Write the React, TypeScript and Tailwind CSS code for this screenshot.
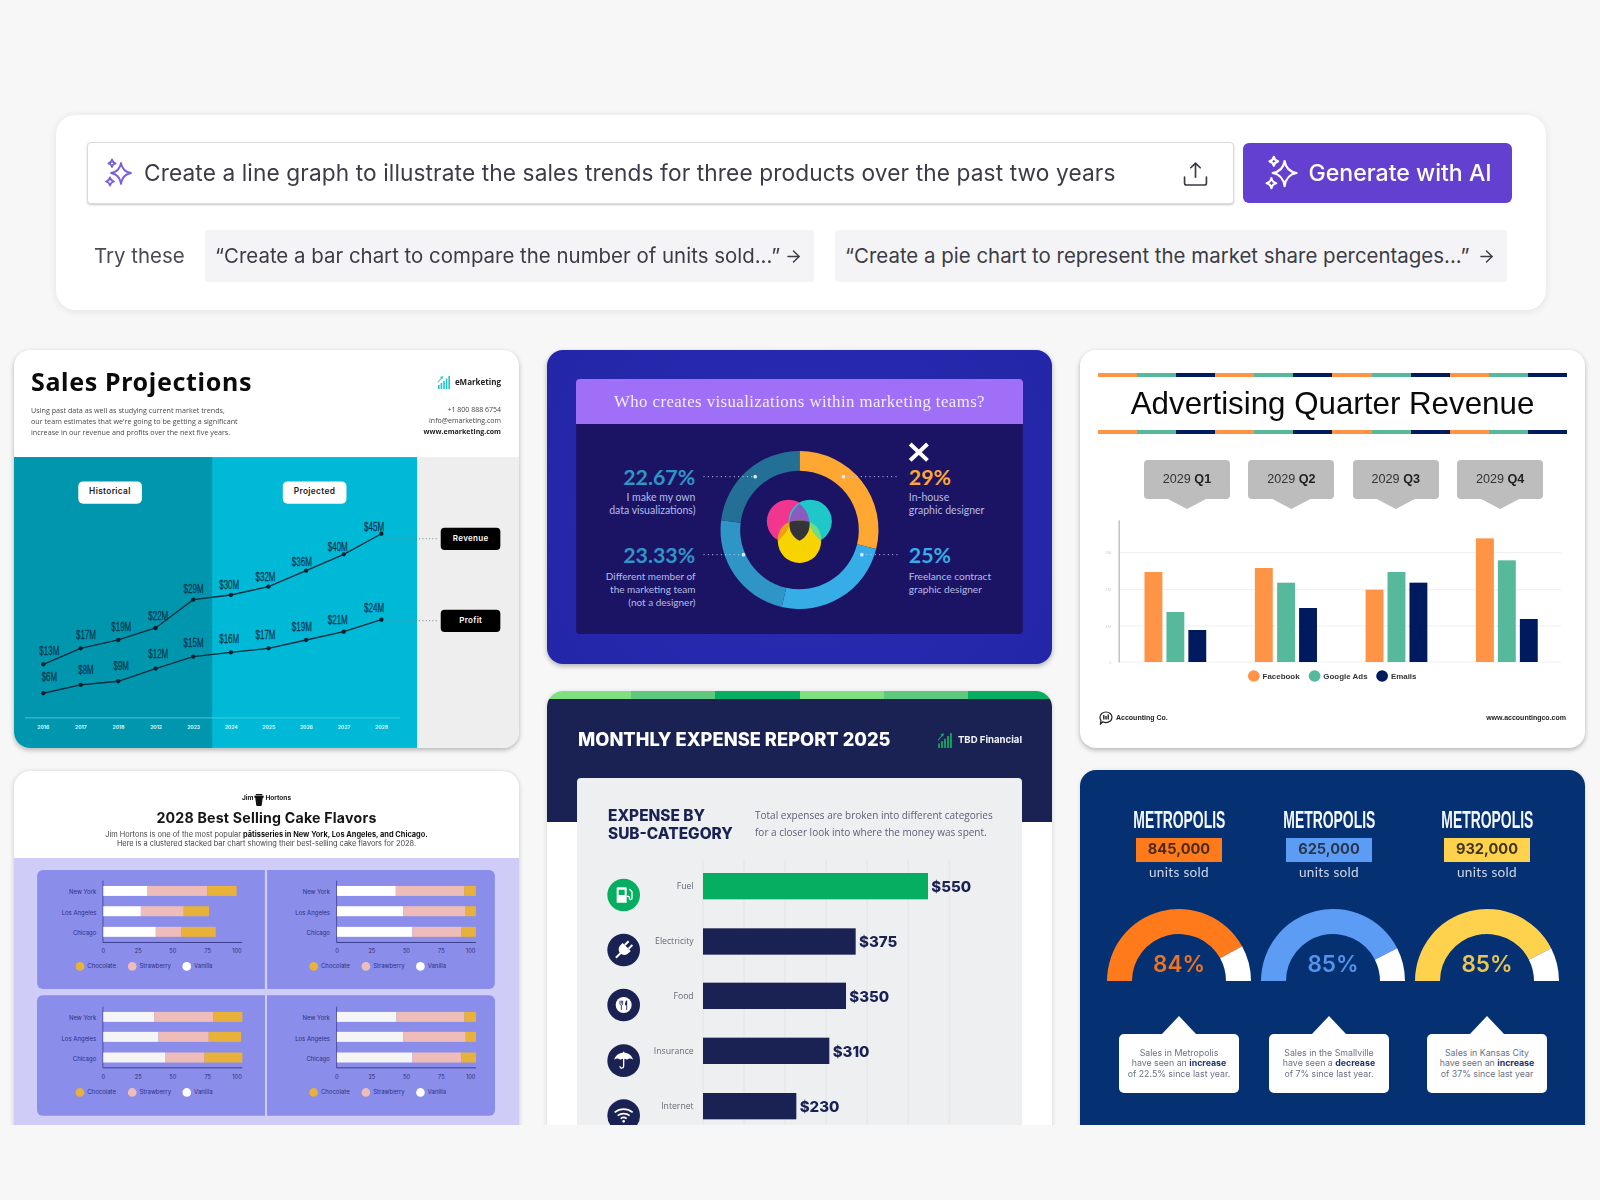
import React from "react";
import { ArrowRight } from "lucide-react";

const pt = (cx: number, cy: number, r: number, a: number) => {
  const t = ((a - 90) * Math.PI) / 180;
  return [cx + r * Math.cos(t), cy + r * Math.sin(t)];
};
const sector = (cx: number, cy: number, R: number, r: number, a0: number, a1: number) => {
  const [x0, y0] = pt(cx, cy, R, a0);
  const [x1, y1] = pt(cx, cy, R, a1);
  const [x2, y2] = pt(cx, cy, r, a1);
  const [x3, y3] = pt(cx, cy, r, a0);
  const large = a1 - a0 > 180 ? 1 : 0;
  return `M${x0} ${y0}A${R} ${R} 0 ${large} 1 ${x1} ${y1}L${x2} ${y2}A${r} ${r} 0 ${large} 0 ${x3} ${y3}Z`;
};

const Sparkle = ({ color, className }: { color: string; className: string }) => (
  <svg viewBox="0 0 30 30" className={className} fill="none" stroke={color} strokeWidth="1.8" strokeLinejoin="round">
    <path d="M18 5C18.9 10.8 22 14 28 15C22 16 18.9 19.2 18 26C17.1 19.2 14 16 8 15C14 14 17.1 10.8 18 5Z" />
    <path d="M9 1.5C9.4 3.8 10.4 4.8 12.6 5.3C10.4 5.8 9.4 6.8 9 9.1C8.6 6.8 7.6 5.8 5.4 5.3C7.6 4.8 8.6 3.8 9 1.5Z" />
    <path d="M7 19.3C7.4 21.8 8.6 22.9 11 23.5C8.6 24.1 7.4 25.2 7 27.7C6.6 25.2 5.4 24.1 3 23.5C5.4 22.9 6.6 21.8 7 19.3Z" />
  </svg>
);

const Chip = ({ text, className }: { text: string; className: string }) => (
  <div className={`flex h-[52px] items-center justify-between whitespace-nowrap rounded-[3px] bg-[#f4f4f6] pl-[10px] pr-[11px] text-[20.45px] text-[#3c3c46] ${className}`}>
    <span>{text}</span>
    <ArrowRight size={19} strokeWidth={1.8} />
  </div>
);

const SEARCH = "Create a line graph to illustrate the sales trends for three products over the past two years";

const PromptPanel = () => (
  <section className="ml-[56px] mr-[54px] h-[195px] rounded-[20px] bg-white pl-[31px] pt-[27px] font-['Inter',sans-serif] shadow-[0_1px_8px_rgba(0,0,0,0.09)]">
    <div className="flex h-[62px] items-start gap-[9px]">
      <div className="flex h-[62px] w-[1147px] items-center rounded-[4px] border border-[#dcdcde] bg-white pl-[15px] pr-[25px] shadow-[0_1px_2px_rgba(0,0,0,0.22)]">
        <Sparkle color="#7a5fd8" className="h-[30px] w-[30px]" />
        <span className="ml-[11px] flex-1 text-[22.7px] tracking-[0.1px] text-[#3c3c48]">{SEARCH}</span>
        <svg viewBox="0 0 24 24" className="h-[25px] w-[25px]" fill="none" stroke="#3a3a44" strokeWidth="1.6" strokeLinecap="round" strokeLinejoin="round">
          <path d="M12 15.5V2M7.5 6.5L12 2L16.5 6.5" />
          <path d="M1.5 15.5V21C1.5 22 2.2 23 3.5 23H20.5C21.8 23 22.5 22 22.5 21V15.5" />
        </svg>
      </div>
      <button className="mt-[1px] flex h-[60px] w-[269px] items-center justify-center gap-[9px] rounded-[6px] bg-[#6340d0] text-[23.1px] font-medium text-white">
        <Sparkle color="#ffffff" className="h-[36px] w-[36px]" />
        <span>Generate with AI</span>
      </button>
    </div>
    <div className="mt-[26px] flex h-[52px] items-center">
      <span className="ml-[7px] w-[111px] text-[20.45px] text-[#4a4a55]">Try these</span>
      <Chip text="“Create a bar chart to compare the number of units sold...”" className="w-[609px]" />
      <Chip text="“Create a pie chart to represent the market share percentages...”" className="ml-[21px] w-[672px]" />
    </div>
  </section>
);

const rev: [number, number, string, number, number][] = [
  [100, 958, "$13M", 118, 915], [212, 910, "$17M", 228, 868], [325, 885, "$19M", 334, 845], [437, 849, "$22M", 445, 811], [550, 764, "$29M", 551, 730],
  [663, 750, "$30M", 658, 718], [776, 725, "$32M", 767, 694], [889, 677, "$36M", 876, 650], [1002, 628, "$40M", 984, 604], [1115, 566, "$45M", 1093, 545],
];
const prof: [number, number, string, number, number][] = [
  [100, 1045, "$6M", 118, 995], [212, 1020, "$8M", 228, 973], [325, 1009, "$9M", 334, 961], [437, 971, "$12M", 445, 926], [550, 935, "$15M", 551, 892],
  [663, 922, "$16M", 658, 879], [776, 910, "$17M", 767, 868], [889, 885, "$19M", 876, 845], [1002, 860, "$21M", 984, 822], [1115, 824, "$24M", 1093, 788],
];
const years = ["2016", "2017", "2018", "2012", "2023", "2024", "2025", "2026", "2027", "2028"];

const BarsLogo = ({ color, className }: { color: string; className: string }) => (
  <svg viewBox="0 0 14 14" className={className} fill={color}>
    <rect x="1" y="10" width="1.6" height="4" />
    <rect x="3.6" y="8" width="1.6" height="6" />
    <rect x="6.2" y="6" width="1.6" height="8" />
    <rect x="8.8" y="3.5" width="1.6" height="10.5" />
    <rect x="11.4" y="1" width="1.6" height="13" />
    <path d="M0.5 7L4 3L3 2L6 1L5.5 4L4.8 3.6L1.2 7.6Z" />
  </svg>
);

const SalesCard = () => (
  <article className="h-[398px] overflow-hidden rounded-[16px] bg-white shadow-[0_2px_5px_rgba(0,0,0,0.28)]">
    <header className="flex h-[107px] justify-between pl-[17px] pr-[18px] pt-[14px]">
      <div>
        <h2 className="font-['Noto_Sans',sans-serif] text-[25px] font-bold leading-[34px] tracking-[0.65px] text-[#0b0b0b]">Sales Projections</h2>
        <p className="mt-[7px] font-['Open_Sans',sans-serif] text-[7.2px] leading-[11px] text-[#4a4a4a]">
          Using past data as well as studying current market trends,<br />
          our team estimates that we're going to be getting a significant<br />
          increase in our revenue and profits over the next five years.
        </p>
      </div>
      <div className="flex flex-col items-end font-['Open_Sans',sans-serif]">
        <div className="mt-[5px] flex h-[26px] items-center gap-[4px]">
          <BarsLogo color="#22c3cf" className="h-[14px] w-[14px]" />
          <span className="text-[8px] font-bold text-[#222]">eMarketing</span>
        </div>
        <p className="mt-[9px] text-right text-[7px] leading-[11px] text-[#444]">
          +1 800 888 6754<br />info@emarketing.com<br /><b className="text-[#222]">www.emarketing.com</b>
        </p>
      </div>
    </header>
    <svg viewBox="12 336 1516 873" className="block h-[291px] w-[505px]">
      <rect x="12" y="336" width="1516" height="873" fill="#eeeeee" />
      <rect x="12" y="336" width="1210" height="873" fill="#00b9d6" />
      <rect x="12" y="336" width="595" height="873" fill="#0097ae" />
      {[[205, "Historical"], [819, "Projected"]].map(([x, t]) => (
        <g key={t as string}>
          <rect x={x as number} y="409" width="191" height="67" rx="14" fill="#fff" />
          <text x={(x as number) + 95} y="448" textAnchor="middle" fontFamily="Inter" fontWeight="600" fontSize="25" letterSpacing="1" fill="#222">{t}</text>
        </g>
      ))}
      {[[548, "Revenue", 581], [794, "Profit", 827]].map(([y, t, ly]) => (
        <g key={t as string}>
          <rect x="1293" y={y as number} width="179" height="67" rx="12" fill="#000" />
          <text x="1383" y={(y as number) + 40} textAnchor="middle" fontFamily="Inter" fontWeight="600" fontSize="24" letterSpacing="1" fill="#fff">{t}</text>
          <line x1="1118" y1={ly as number} x2="1282" y2={ly as number} stroke="#6b8a90" strokeWidth="3" strokeDasharray="3 7" />
        </g>
      ))}
      {[rev, prof].map((s, i) => (
        <g key={i}>
          <polyline points={s.map((p) => `${p[0]},${p[1]}`).join(" ")} fill="none" stroke="#062a3c" strokeWidth="4" />
          {s.map((p) => <circle key={p[0]} cx={p[0]} cy={p[1]} r="6.5" fill="#04202e" />)}
          {s.map((p) => (
            <text key={p[2] + p[0]} x={p[3]} y={p[4] + 14} textAnchor="middle" fontFamily="Liberation Sans" fontSize="38" stroke="#06384e" strokeWidth="0.8" fill="#06384e" textLength={p[2].length > 3 ? 60 : 46} lengthAdjust="spacingAndGlyphs">{p[2]}</text>
          ))}
        </g>
      ))}
      <line x1="45" y1="1119" x2="1170" y2="1119" stroke="#4fd2e4" strokeWidth="2.5" />
      {years.map((y, i) => (
        <text key={i} x={100 + i * 112.8} y="1151" textAnchor="middle" fontFamily="Inter" fontWeight="700" fontSize="15" fill="#d8f6fb">{y}</text>
      ))}
    </svg>
  </article>
);

const legendSet = [[209, "Chocolate", "#e8b23a"], [366, "Strawberry", "#efbdb9"], [530, "Vanilla", "#ffffff"]] as const;

const CakePanel = ({ ox, bars, h, fill, yr, axisTop, axisBot, tick, legend, rowLabels, cls }: {
  ox: number; bars: number[][]; h: number; fill: string; yr: number[]; axisTop: number; axisBot: number; tick: number; legend: number; rowLabels: number[]; cls: string;
}) => (
  <svg viewBox={`${-ox} 0 685 ${h}`} className={cls}>
    <rect x={-ox} y="0" width="685" height={h} fill="#8b8deb" />
    <line x1="198" y1={axisTop} x2="198" y2={axisBot} stroke="#2d2f7a" strokeWidth="2" />
    <line x1="198" y1={axisBot} x2="617" y2={axisBot} stroke="#2d2f7a" strokeWidth="2.5" />
    {bars.map((b, i) => (
      <g key={i}>
        <rect x="199" y={yr[i]} width={b[0]} height="30" fill={fill} />
        <rect x={199 + b[0]} y={yr[i]} width={b[1] - b[0]} height="30" fill="#efbdb9" />
        <rect x={199 + b[1]} y={yr[i]} width={b[2] - b[1]} height="30" fill="#e8b23a" />
      </g>
    ))}
    {["New York", "Los Angeles", "Chicago"].map((t, i) => (
      <text key={t} x="178" y={rowLabels[i]} textAnchor="end" fontFamily="Inter" fontSize="18" fill="#2d2f7a">{t}</text>
    ))}
    {[["0", 199], ["25", 304], ["50", 408], ["75", 513], ["100", 601]].map(([t, x]) => (
      <text key={t as string} x={x as number} y={tick} textAnchor="middle" fontFamily="Inter" fontSize="17" fill="#2d2f7a">{t}</text>
    ))}
    {legendSet.map(([x, t, c]) => (
      <g key={t}>
        <circle cx={x - 80} cy={legend} r="13" fill={c} />
        <text x={x - 58} y={legend + 6} fontFamily="Inter" fontSize="18" fill="#2d2f7a">{t}</text>
      </g>
    ))}
  </svg>
);

const CakeCard = () => (
  <article className="mt-[23px] h-[420px] overflow-hidden rounded-t-[16px] bg-[#d0ccf8] shadow-[0_1px_5px_rgba(0,0,0,0.2)]">
    <header className="flex h-[87px] flex-col items-center bg-white pt-[20px] font-['Inter',sans-serif] text-[#151515]">
      <div className="flex h-[16px] items-center gap-[1px] text-[6.5px] font-bold">
        <span>Jim</span>
        <svg viewBox="0 0 10 14" className="h-[13px] w-[10px]" fill="#111"><path d="M0 3H10V5H9L8 13C8 13.6 7.5 14 7 14H3C2.5 14 2 13.6 2 13L1 5H0ZM2 1H8L9 2.4H1Z" /></svg>
        <span>Hortons</span>
      </div>
      <h2 className="mt-[1px] text-[14.2px] font-bold leading-[20px] tracking-[0.2px]">2028 Best Selling Cake Flavors</h2>
      <p className="mt-[2px] text-center text-[7.4px] leading-[9px] text-[#444]">
        Jim Hortons is one of the most popular <b className="text-[#111]">pâtisseries in New York, Los Angeles, and Chicago.</b><br />
        Here is a clustered stacked bar chart showing their best-selling cake flavors for 2028.
      </p>
    </header>
    <div className="grid grid-cols-[228px_228px] gap-x-[2px] gap-y-[6px] px-[23px] pt-[12px]">
      <CakePanel ox={0} h={358} fill="#ffffff" axisTop={32} axisBot={218} tick={249} legend={290} yr={[48, 109, 171]} rowLabels={[72, 134, 196]}
        bars={[[133, 313, 401], [113, 242, 318], [158, 234, 338]]} cls="block h-[119px] w-[228px] rounded-l-[6px]" />
      <CakePanel ox={11} h={358} fill="#ffffff" axisTop={32} axisBot={218} tick={249} legend={290} yr={[48, 109, 171]} rowLabels={[72, 134, 196]}
        bars={[[177, 383, 418], [199, 387, 418], [227, 374, 418]]} cls="block h-[119px] w-[228px] rounded-r-[6px]" />
      <CakePanel ox={0} h={362} fill="#f5f5f5" axisTop={34} axisBot={218} tick={251} legend={292} yr={[50, 110, 172]} rowLabels={[74, 136, 198]}
        bars={[[153, 331, 418], [166, 317, 414], [187, 304, 418]]} cls="block h-[121px] w-[228px] rounded-l-[6px]" />
      <CakePanel ox={11} h={362} fill="#f5f5f5" axisTop={34} axisBot={218} tick={251} legend={292} yr={[50, 110, 172]} rowLabels={[74, 136, 198]}
        bars={[[179, 383, 418], [199, 387, 418], [227, 374, 418]]} cls="block h-[121px] w-[228px] rounded-r-[6px]" />
    </div>
  </article>
);

const Label = ({ x, y, lines, anchor, size }: { x: number; y: number; lines: string[]; anchor: "start" | "end"; size: number }) => (
  <>
    {lines.map((l, i) => (
      <text key={l} x={x} y={y + i * 38.5} textAnchor={anchor} fontFamily="Lato" fontSize={size} fill="#b5bbe6">{l}</text>
    ))}
  </>
);

const DonutCard = () => (
  <article className="h-[314px] overflow-hidden rounded-[16px] bg-[#2828ae] bg-[radial-gradient(circle_at_50%_50%,#2a2cb4,#2326a8)] px-[29px] pt-[29px] shadow-[0_2px_5px_rgba(0,0,0,0.3)]">
    <div className="flex h-[45px] items-center justify-center rounded-t-[4px] bg-[#a06ff8] pt-[1px] font-['Liberation_Serif',serif] text-[16.8px] tracking-[0.42px] text-[#f3ecff]">
      Who creates visualizations within marketing teams?
    </div>
    <svg viewBox="108 238 1340 630" className="block h-[210px] w-[447px] rounded-b-[4px]">
      <rect x="108" y="238" width="1340" height="630" fill="#1b1464" />
      <path d={sector(778, 556, 237, 178, 0, 104)} fill="#ffa733" />
      <path d={sector(778, 556, 237, 178, 104, 193)} fill="#36ade6" />
      <path d={sector(778, 556, 237, 178, 193, 277)} fill="#2f95c6" />
      <path d={sector(778, 556, 237, 178, 277, 360)} fill="#236f95" />
      <circle cx="745" cy="530" r="65" fill="#f0368f" />
      <circle cx="810" cy="530" r="65" fill="#1fc7c9" />
      <circle cx="778" cy="590" r="65" fill="#f7d400" />
      <path d="M778 477C795 490 806 510 808 532C795 526 762 526 748 532C750 510 761 490 778 477Z" fill="#8a5cc0" />
      <path d="M748 532C745 555 742 560 713 590C712 560 725 540 748 532Z" fill="#ee9f12" />
      <path d="M808 532C811 555 814 560 843 590C844 560 830 540 808 532Z" fill="#6fdc88" />
      <path d="M748 532C762 526 795 526 808 532C811 555 800 578 778 588C756 578 745 555 748 532Z" fill="#333339" />
      <line x1="490" y1="396" x2="645" y2="396" stroke="#c9d5f0" strokeWidth="3" strokeDasharray="3 10" />
      <line x1="910" y1="396" x2="1075" y2="396" stroke="#c9d5f0" strokeWidth="3" strokeDasharray="3 10" />
      <line x1="490" y1="630" x2="610" y2="630" stroke="#c9d5f0" strokeWidth="3" strokeDasharray="3 10" />
      <line x1="965" y1="630" x2="1078" y2="630" stroke="#c9d5f0" strokeWidth="3" strokeDasharray="3 10" />
      {[[645, 396], [910, 396], [610, 630], [965, 630]].map(([x, y]) => <circle key={x} cx={x} cy={y} r="5.5" fill="#dbe8f7" />)}
      <path d="M1110 298L1162 347M1162 298L1110 347" stroke="#ffffff" strokeWidth="12" />
      <text x="465" y="420" textAnchor="end" fontFamily="Lato" fontWeight="700" fontSize="64" fill="#2f95c6">22.67%</text>
      <text x="465" y="654" textAnchor="end" fontFamily="Lato" fontWeight="700" fontSize="64" fill="#2f95c6">23.33%</text>
      <text x="1106" y="420" fontFamily="Lato" fontWeight="700" fontSize="64" fill="#ffa733">29%</text>
      <text x="1106" y="654" fontFamily="Lato" fontWeight="700" fontSize="64" fill="#36ade6">25%</text>
      <Label x={466} y={470} anchor="end" size={31.5} lines={["I make my own", "data visualizations)"]} />
      <Label x={466} y={706} anchor="end" size={30} lines={["Different member of", "the marketing team", "(not a designer)"]} />
      <Label x={1106} y={470} anchor="start" size={31.5} lines={["In-house", "graphic designer"]} />
      <Label x={1106} y={706} anchor="start" size={30.5} lines={["Freelance contract", "graphic designer"]} />
    </svg>
  </article>
);

const expense: [string, number, number, number, string, number, string][] = [
  ["Fuel", 564, 1165, 630, "#05ae60", 603, "$550"],
  ["Electricity", 730, 948, 795, "#1a2254", 768, "$375"],
  ["Food", 893, 919, 960, "#1a2254", 933, "$350"],
  ["Insurance", 1058, 869, 1127, "#1a2254", 1098, "$310"],
  ["Internet", 1224, 770, 1292, "#1a2254", 1263, "$230"],
];

const ExpenseCard = () => (
  <article className="mt-[27px] h-[460px] overflow-hidden rounded-t-[16px] bg-white font-['Inter',sans-serif] shadow-[0_1px_5px_rgba(0,0,0,0.15)]">
    <div className="flex h-[8px]">
      {["#7ee081", "#5ec97e", "#05ae60", "#7ee081", "#5ec97e", "#05ae60"].map((c, i) => (
        <div key={i} className="h-full flex-1" style={{ background: c }} />
      ))}
    </div>
    <header className="flex h-[123px] justify-between bg-[#1a2254] pl-[31px] pr-[30px] pt-[27px]">
      <h2 className="text-[18.3px] font-extrabold leading-[26px] text-white">MONTHLY EXPENSE REPORT 2025</h2>
      <div className="mt-[1px] flex h-[26px] items-center gap-[5px]">
        <BarsLogo color="#12a860" className="h-[16px] w-[16px]" />
        <span className="text-[9.6px] font-bold text-[#f2f4fa]">TBD Financial</span>
      </div>
    </header>
    <div className="relative mx-[30px] -mt-[44px] h-[420px] rounded-t-[4px] bg-[#eeeff0]">
      <div className="flex h-[82px] pl-[31px] pt-[29px]">
        <h3 className="w-[147px] text-[15.4px] font-extrabold leading-[18px] text-[#1a2254]">EXPENSE BY<br />SUB-CATEGORY</h3>
        <p className="font-['Open_Sans',sans-serif] text-[10px] leading-[17px] text-[#5a5f78]">
          Total expenses are broken into different categories<br />for a closer look into where the money was spent.
        </p>
      </div>
      <svg viewBox="112 525 1335 795" className="block h-[265px] w-[445px]">
        {[490, 613, 736, 859, 982, 1106, 1229].map((x) => (
          <line key={x} x1={x} y1="525" x2={x} y2="1320" stroke="#dfe0e2" strokeWidth="2" />
        ))}
        {expense.map(([t, y, x2, cy, c, ly, v]) => (
          <g key={t}>
            <circle cx="252" cy={cy} r="49" fill={c} />
            <text x="462" y={ly + 9} textAnchor="end" fontFamily="Open Sans" fontSize="26" fill="#666a78">{t}</text>
            <rect x="490" y={y} width={x2 - 490} height="79" fill={c} />
            <text x={x2 + 10} y={y + 57} fontFamily="Inter" fontWeight="800" fontSize="45" fill="#1a2254">{v}</text>
          </g>
        ))}
        <path d="M231 610a3 3 0 0 1 3-3h24a3 3 0 0 1 3 3v43h-30ZM237 614v16h18v-16Z" fill="#fff" fillRule="evenodd" />
        <path d="M261 634h5c3 0 3 3 3 5s1 5 4 5 4-3 4-5v-19l-8-8" fill="none" stroke="#fff" strokeWidth="4" />
        <g transform="rotate(45 252 795)" fill="#fff">
          <rect x="241" y="766" width="6" height="16" />
          <rect x="257" y="766" width="6" height="16" />
          <path d="M235 782h34v9c0 11-8 18-17 18s-17-7-17-18Z" />
          <rect x="249" y="806" width="6" height="22" />
        </g>
        <circle cx="252" cy="960" r="24" fill="#fff" />
        <path d="M241 947v9c0 3 2 5 4 5M249 947v9c0 3-2 5-4 5M245 947v9M245 961v14" stroke="#1a2254" strokeWidth="2.5" fill="none" />
        <path d="M262 946c-5 2-6 8-6 15h4v14h2.500v-29Z" fill="#1a2254" />
        <path d="M224 1124c3-14 15-21 28-21s25 7 28 21c-6-5-12-5-18 0-3-3-7-3-10-3s-7 0-10 3c-6-5-12-5-18 0Z" fill="#fff" />
        <path d="M252 1100v43c0 8-11 8-11 1" stroke="#fff" strokeWidth="4" fill="none" />
        <path d="M225 1282c16-13 38-13 54 0M234 1292c10-8 26-8 36 0M243 1301c5-4 13-4 18 0" stroke="#fff" strokeWidth="5" fill="none" />
        <circle cx="252" cy="1309" r="4" fill="#fff" />
      </svg>
    </div>
  </article>
);

const qs = ["Q1", "Q2", "Q3", "Q4"];
const qbars = [
  [[218, 680, "#ff9447"], [283, 800, "#57b99c"], [348, 854, "#001a5e"]],
  [[545, 668, "#ff9447"], [611, 712, "#57b99c"], [676, 788, "#001a5e"]],
  [[873, 733, "#ff9447"], [938, 680, "#57b99c"], [1003, 712, "#001a5e"]],
  [[1200, 579, "#ff9447"], [1265, 645, "#57b99c"], [1330, 821, "#001a5e"]],
] as [number, number, string][][];

const Stripe = () => (
  <div className="mx-[18px] flex h-[4px]">
    {Array.from({ length: 12 }).map((_, i) => (
      <div key={i} className="h-full flex-1" style={{ background: ["#ff9447", "#57b99c", "#001a5e"][i % 3] }} />
    ))}
  </div>
);

const RevenueCard = () => (
  <article className="h-[398px] overflow-hidden rounded-[16px] bg-white pt-[23px] font-['Liberation_Sans',sans-serif] shadow-[0_2px_5px_rgba(0,0,0,0.28)]">
    <Stripe />
    <h2 className="h-[53px] text-center text-[31.3px] leading-[54px] text-[#0a0a0a]">Advertising Quarter Revenue</h2>
    <Stripe />
    <div className="ml-[64px] mt-[26px] flex gap-[18.4px]">
      {qs.map((q) => (
        <div key={q} className="w-[86px]">
          <div className="flex h-[39px] items-center justify-center rounded-[4px] bg-[#bdbdbd] text-[12.6px] text-[#333]">
            <span>2029&nbsp;<b className="text-[#222]">{q}</b></span>
          </div>
          <div className="mx-auto h-[10px] w-[38px] bg-[#bdbdbd] [clip-path:polygon(0_0,100%_0,50%_100%)]" />
        </div>
      ))}
    </div>
    <svg viewBox="27 515 1496 540" preserveAspectRatio="none" className="mt-[8px] block h-[180px] w-[505px]">
      {[622, 733, 842, 950].map((y) => <line key={y} x1="143" y1={y} x2="1452" y2={y} stroke="#e3e6ea" strokeWidth="2" />)}
      <line x1="143" y1="525" x2="143" y2="951" stroke="#7a7a7a" strokeWidth="2" />
      {qbars.flat().map(([x, y, c]) => <rect key={x} x={x} y={y} width="53" height={950 - y} fill={c} />)}
      {[["3M", 622], ["2M", 733], ["1M", 842], ["0", 950]].map(([t, y]) => (
        <text key={t as string} x="120" y={(y as number) + 5} textAnchor="end" fontSize="13" fill="#d4d4d4" fontFamily="Liberation Sans">{t}</text>
      ))}
      {[[542, "Facebook", "#ff9447"], [722, "Google Ads", "#57b99c"], [922, "Emails", "#001a5e"]].map(([x, t, c]) => (
        <g key={t as string}>
          <circle cx={x as number} cy="992" r="17.5" fill={c as string} />
          <text x={(x as number) + 26} y="1000" fontSize="23.5" fontWeight="700" fill="#333" fontFamily="Liberation Sans">{t}</text>
        </g>
      ))}
    </svg>
    <footer className="mt-[14px] flex items-center justify-between px-[19px] text-[7px] font-bold text-[#222]">
      <div className="flex items-center gap-[3px]">
        <svg viewBox="0 0 14 14" className="h-[14px] w-[14px]" fill="none" stroke="#222" strokeWidth="1.2">
          <path d="M7 1C10.3 1 13 3.4 13 6.3C13 9.2 10.3 11.6 7 11.6C5.8 11.6 4.8 11.3 3.9 10.8L1.5 13L2 9.6C1.4 8.7 1 7.5 1 6.3C1 3.4 3.7 1 7 1Z" />
          <path d="M4.8 4V8.5M7 5V8.5M9.2 3.5V8.5" strokeWidth="1.4" />
        </svg>
        <span>Accounting Co.</span>
      </div>
      <span>www.accountingco.com</span>
    </footer>
  </article>
);

const gauges = [
  { title: "845,000", color: "#ff7a1a", badge: "text-[#4a2a16]", pct: "84%", frac: 0.84, lines: ["Sales in Metropolis", "have seen an ", "increase", "of 22.5% since last year."], cls: "" },
  { title: "625,000", color: "#5c9cf5", badge: "text-[#26374f]", pct: "85%", frac: 0.85, lines: ["Sales in the Smallville", "have seen a ", "decrease", "of 7% since last year."], cls: "translate-x-[4px]" },
  { title: "932,000", color: "#ffd24d", badge: "text-[#3f3514]", pct: "85%", frac: 0.85, lines: ["Sales in Kansas City", "have seen an ", "increase", "of 37% since last year"], cls: "" },
];

const MetroCard = () => (
  <article className="mt-[22px] flex h-[400px] gap-[8px] overflow-hidden rounded-t-[16px] bg-[#053173] pl-[24px] pt-[34px] font-['Inter',sans-serif] shadow-[0_1px_5px_rgba(0,0,0,0.12)]">
    {gauges.map((g, i) => (
      <div key={i} className={`flex w-[150px] flex-col items-center ${i === 1 ? "-ml-[8px]" : ""}`}>
        <h3 className="h-[31px] scale-x-[0.58] font-['Liberation_Sans',sans-serif] text-[24px] font-bold leading-[31px] text-[#f4f7fb]">METROPOLIS</h3>
        <div className={`mt-[3px] flex h-[24px] w-[86px] items-center justify-center text-[14.6px] font-bold ${g.badge}`} style={{ background: g.color }}>{g.title}</div>
        <div className="h-[20px] font-['Lato',sans-serif] text-[13.6px] leading-[20px] tracking-[0.3px] text-[#cfd8ea]">units sold</div>
        <svg viewBox="0 0 144 73" className={`mt-[26px] block h-[73px] w-[144px] shrink-0 ${g.cls}`}>
          <path d={sector(72, 73, 72, 47, -90, -90 + 180 * g.frac)} fill={g.color} />
          <path d={sector(72, 73, 72, 47, -90 + 180 * g.frac, 90)} fill="#ffffff" />
          <text x="72" y="63.5" textAnchor="middle" fontFamily="Inter" fontWeight="600" fontSize="22.5" fill={g.color} opacity="0.92">{g.pct}</text>
        </svg>
        <svg viewBox="0 0 34 18" className="mt-[35px] block h-[18px] w-[34px] shrink-0">
          <polygon points="0,18 17,0 34,18" fill="#fff" />
        </svg>
        <div className="flex h-[59px] w-[120px] shrink-0 flex-col items-center justify-center rounded-[5px] bg-white text-center text-[8.8px] leading-[10.6px] text-[#6a7183]">
          <span>{g.lines[0]}</span>
          <span>{g.lines[1]}<b className="text-[#1d3566]">{g.lines[2]}</b></span>
          <span>{g.lines[3]}</span>
        </div>
      </div>
    ))}
  </article>
);

export default function App() {
  return (
    <main className="h-[1200px] w-[1600px] overflow-hidden bg-[#f7f7f8] pt-[115px]">
      <div className="blur-[0.4px]"><PromptPanel /></div>
      <div className="mt-[30px] flex h-[785px] gap-[28px] overflow-hidden px-[14px] pt-[10px] blur-[0.4px]">
        <div className="w-[505px]"><SalesCard /><CakeCard /></div>
        <div className="w-[505px]"><DonutCard /><ExpenseCard /></div>
        <div className="w-[505px]"><RevenueCard /><MetroCard /></div>
      </div>
    </main>
  );
}
